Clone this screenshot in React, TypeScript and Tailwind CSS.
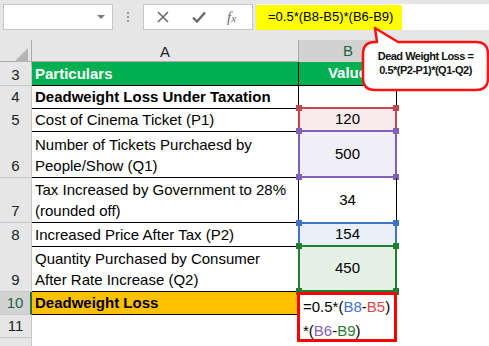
import React from 'react';

type Hl = 'red' | 'purple' | 'blue' | 'green';

const HL: Record<Hl, { border: string; bg: string; dot: string }> = {
  red: { border: 'border-[#c0474a]', bg: 'bg-[#f8eaea]', dot: 'bg-[#c0474a]' },
  purple: { border: 'border-[#8360b8]', bg: 'bg-[#f0eef7]', dot: 'bg-[#8360b8]' },
  blue: { border: 'border-[#3f74c6]', bg: 'bg-[#e9eff8]', dot: 'bg-[#3f74c6]' },
  green: { border: 'border-[#1f7e32]', bg: 'bg-[#e5f1e5]', dot: 'bg-[#1f7e32]' },
};

const ROWS: { n: number; h: string; a: string[]; b?: string; bold?: boolean; hl?: Hl }[] = [
  { n: 4, h: 'h-[22px]', a: ['Deadweight Loss Under Taxation'], bold: true },
  { n: 5, h: 'h-[23px]', a: ['Cost of Cinema Ticket (P1)'], b: '120', hl: 'red' },
  { n: 6, h: 'h-[47px]', a: ['Number of Tickets Purchaesd by', 'People/Show (Q1)'], b: '500', hl: 'purple' },
  { n: 7, h: 'h-[45px]', a: ['Tax Increased by Government to 28%', '(rounded off)'], b: '34' },
  { n: 8, h: 'h-[23px]', a: ['Increased Price After Tax (P2)'], b: '154', hl: 'blue' },
  { n: 9, h: 'h-[46px]', a: ['Quantity Purchased by Consumer', 'After Rate Increase (Q2)'], b: '450', hl: 'green' },
];

const rowHead =
  'flex items-end justify-center border-b border-r border-[#c8c8c8] bg-[#e6e6e6] text-[15px] leading-[21px] text-[#222]';

function Highlight({ hl }: { hl: Hl }) {
  const c = HL[hl];
  return (
    <div className={`absolute left-[-1px] top-[-1px] right-[-1px] bottom-[-1px] border-2 ${c.border} ${c.bg}`}>
      <div className={`absolute -left-[4px] -top-[4px] w-[6px] h-[6px] ${c.dot}`} />
      <div className={`absolute -right-[4px] -top-[4px] w-[6px] h-[6px] ${c.dot}`} />
      <div className={`absolute -left-[4px] -bottom-[4px] w-[6px] h-[6px] ${c.dot}`} />
      <div className={`absolute -right-[4px] -bottom-[4px] w-[6px] h-[6px] ${c.dot}`} />
    </div>
  );
}

export default function App() {
  return (
    <div className="relative w-[489px] h-[346px] overflow-hidden bg-white font-['Liberation_Sans',Arial,sans-serif] text-black">
      {/* Formula bar */}
      <div className="h-[40px] bg-[#e6e6e6] flex items-start pt-[4px]">
        <div className="ml-[3px] w-[110px] h-[26px] bg-white border border-[#c6c6c6] flex items-center justify-end pr-[7px]">
          <div className="w-0 h-0 border-l-[4px] border-r-[4px] border-t-[4px] border-l-transparent border-r-transparent border-t-[#7a7a7a]" />
        </div>
        <div className="w-[30px] h-[26px] flex flex-col items-center justify-center gap-[2px]">
          <div className="w-[2px] h-[2px] bg-[#9a9a9a]" />
          <div className="w-[2px] h-[2px] bg-[#9a9a9a]" />
          <div className="w-[2px] h-[2px] bg-[#9a9a9a]" />
        </div>
        <div className="w-[110px] h-[26px] bg-white border border-[#c6c6c6] flex items-center">
          <svg width="12" height="12" viewBox="0 0 12 12" className="ml-[13px]">
            <path d="M1 1L11 11M11 1L1 11" stroke="#6a6a6a" strokeWidth="1.6" />
          </svg>
          <svg width="14" height="12" viewBox="0 0 14 12" className="ml-[23px]">
            <path d="M1 6.5L5 10.5L13 1.5" stroke="#6a6a6a" strokeWidth="2.4" fill="none" />
          </svg>
          <span className="ml-[21px] font-['Liberation_Serif',serif] italic text-[#6a6a6a] text-[15px] leading-none">
            f<span className="text-[11px]">x</span>
          </span>
        </div>
        <div className="ml-[3px] flex-1 h-[26px] bg-white flex items-center">
          <div className="h-[25px] w-[146px] bg-[#ffff00] flex items-center pl-[12px] text-[13px] text-black">
            =0.5*(B8-B5)*(B6-B9)
          </div>
        </div>
      </div>

      {/* Column headers */}
      <div className="grid grid-cols-[32px_267px_98px_1fr] h-[22px] bg-[#e6e6e6] border-b border-[#ababab] text-[15px]">
        <div className="relative border-r border-[#ababab]">
          <svg width="14" height="14" viewBox="0 0 14 14" className="absolute right-[3px] bottom-[3px]">
            <path d="M14 0L14 14L0 14Z" fill="#b5b5b5" />
          </svg>
        </div>
        <div className="flex items-center justify-center border-r border-[#ababab] text-[#222]">A</div>
        <div className="flex items-center justify-center bg-[#d2d2d2] border-b-2 border-[#217346] text-[#21643a]">B</div>
        <div />
      </div>

      {/* Row 3 */}
      <div className="grid grid-cols-[32px_267px_98px_1fr] h-[24px]">
        <div className={rowHead}>3</div>
        <div className="bg-[#00b050] border-b border-r border-black pl-[3px] flex items-end pb-[1px] text-[15px] leading-[21px] font-bold text-white">
          Particulars
        </div>
        <div className="bg-[#00b050] border-b border-r border-black flex items-center justify-center text-[15px] font-bold text-white">
          Value
        </div>
        <div />
      </div>

      {ROWS.map((r) => (
        <div key={r.n} className={`grid grid-cols-[32px_267px_98px_1fr] ${r.h}`}>
          <div className={`${rowHead} pb-[1px]`}>{r.n}</div>
          <div
            className={`flex flex-col justify-end pl-[3px] pb-[1px] border-b border-r border-black text-[15px] leading-[21px] whitespace-nowrap overflow-visible ${
              r.bold ? 'font-bold' : ''
            }`}
          >
            {r.a.map((t) => (
              <div key={t}>{t}</div>
            ))}
          </div>
          <div className="relative border-b border-r border-black flex items-center justify-center text-[15px]">
            {r.hl && <Highlight hl={r.hl} />}
            <span className="relative">{r.b}</span>
          </div>
          <div />
        </div>
      ))}

      {/* Row 10 */}
      <div className="grid grid-cols-[32px_267px_98px_1fr] h-[23px]">
        <div className="flex items-end justify-center pb-[1px] border-b border-r-2 border-b-[#c8c8c8] border-r-[#217346] bg-[#d2d2d2] text-[15px] leading-[21px] text-[#21643a]">
          10
        </div>
        <div className="bg-[#ffc000] border-b border-black pl-[3px] flex items-end pb-[1px] text-[15px] leading-[21px] font-bold">
          Deadweight Loss
        </div>
        <div className="relative">
          <div className="absolute -left-[3px] -top-[3px] w-[6px] h-[6px] bg-[#1f7e32]" />
          <div className="absolute right-[-2px] -top-[3px] w-[6px] h-[6px] bg-[#1f7e32]" />
          <div className="absolute left-[-2px] top-0 w-[100px] h-[50px] border-[3px] border-[#ff0000] bg-white z-10 pl-[3px] text-[15px] leading-[24px]">
            <div>
              =0.5*(<span className="text-[#3f74c6]">B8</span>-<span className="text-[#d9434a]">B5</span>)
            </div>
            <div>
              *(<span className="text-[#8360b8]">B6</span>-<span className="text-[#1f7e32]">B9</span>)
            </div>
          </div>
        </div>
        <div />
      </div>

      {/* Row 11 */}
      <div className="grid grid-cols-[32px_267px_98px_1fr] h-[23px]">
        <div className={`${rowHead} pb-[1px]`}>11</div>
        <div />
        <div />
        <div />
      </div>

      {/* Row 12, only its top edge shows */}
      <div className="grid grid-cols-[32px_267px_98px_1fr] h-[8px] overflow-hidden">
        <div className="bg-[#e6e6e6] border-r border-[#c8c8c8]" />
        <div />
        <div />
        <div />
      </div>

      {/* Callout */}
      <div className="absolute left-[360px] top-[26px] w-[131px] h-[67px] z-20">
        <svg width="131" height="67" viewBox="0 0 131 67" className="absolute inset-0">
          <path
            d="M17 16 L15 2 L38 16 L116 16 Q128 16 128 28 L128 52 Q128 64 116 64 L15 64 Q3 64 3 52 L3 28 Q3 16 15 16 Z"
            fill="white"
            stroke="#ff1010"
            strokeWidth="2.5"
            strokeLinejoin="round"
          />
        </svg>
        <div className="absolute left-[2px] right-[2px] top-[23px] flex flex-col items-center text-[11px] leading-[14px] font-bold tracking-[-0.5px] text-[#111]">
          <div>Dead Weight Loss =</div>
          <div>0.5*(P2-P1)*(Q1-Q2)</div>
        </div>
      </div>
    </div>
  );
}
